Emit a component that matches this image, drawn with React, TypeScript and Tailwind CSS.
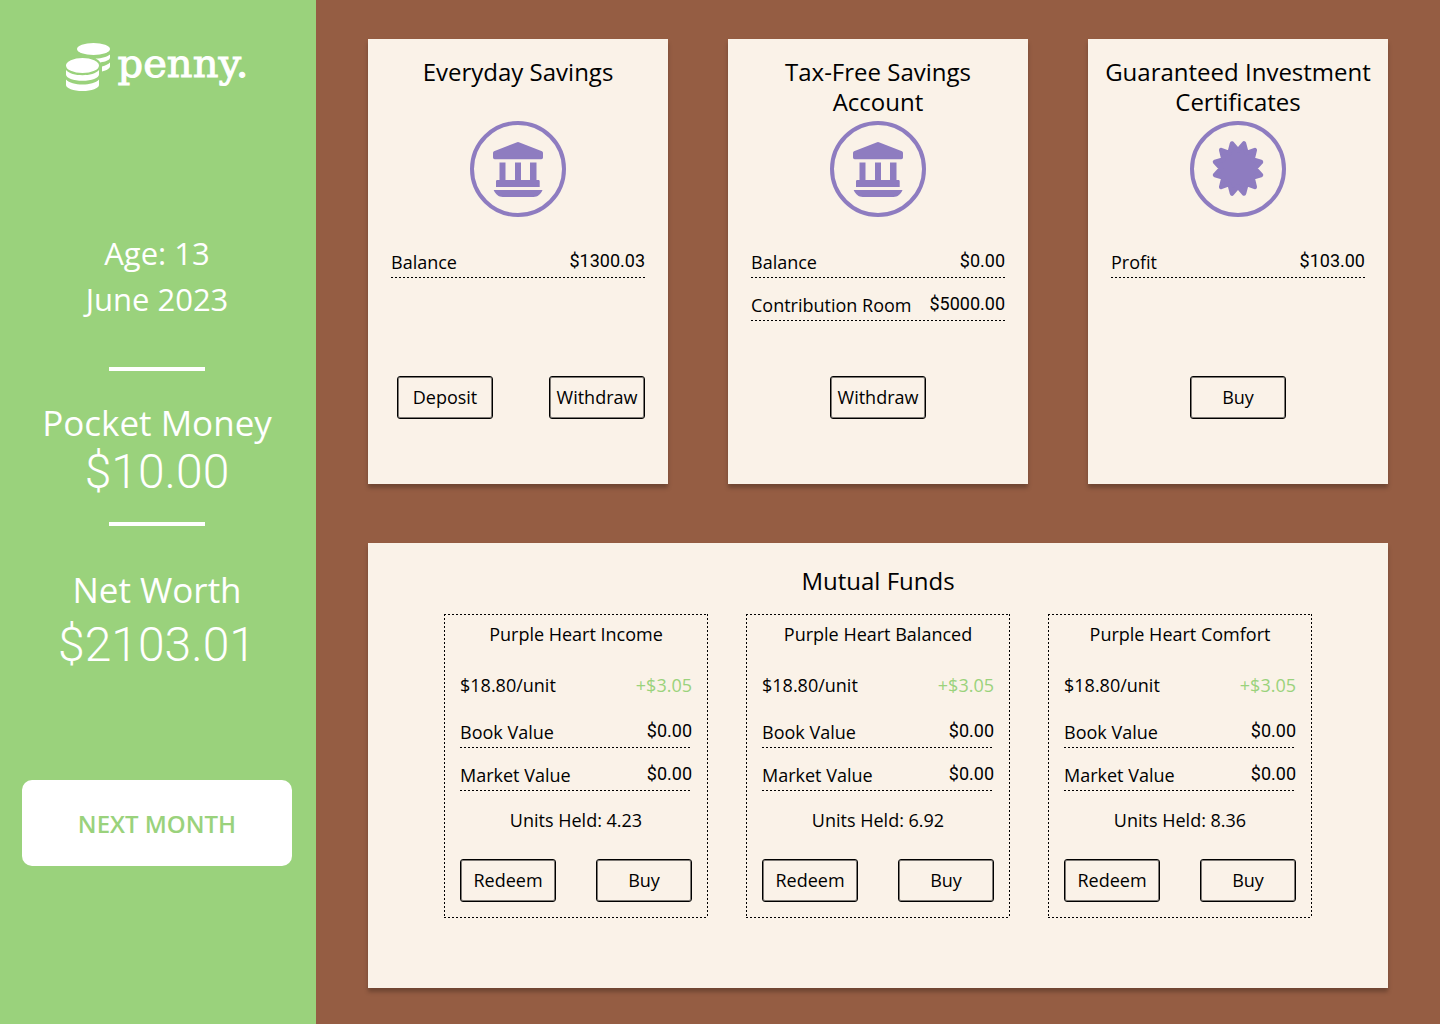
import React from 'react';

type Row = { label: string; value: string };

const ACCOUNTS: { title: string; icon: 'bank' | 'seal'; rows: Row[]; actions: string[] }[] = [
  {
    title: 'Everyday Savings',
    icon: 'bank',
    rows: [{ label: 'Balance', value: '$1300.03' }],
    actions: ['Deposit', 'Withdraw'],
  },
  {
    title: 'Tax-Free Savings Account',
    icon: 'bank',
    rows: [
      { label: 'Balance', value: '$0.00' },
      { label: 'Contribution Room', value: '$5000.00' },
    ],
    actions: ['Withdraw'],
  },
  {
    title: 'Guaranteed Investment Certificates',
    icon: 'seal',
    rows: [{ label: 'Profit', value: '$103.00' }],
    actions: ['Buy'],
  },
];

const FUNDS = [
  { name: 'Purple Heart Income', price: '$18.80/unit', change: '+$3.05', book: '$0.00', market: '$0.00', units: '4.23' },
  { name: 'Purple Heart Balanced', price: '$18.80/unit', change: '+$3.05', book: '$0.00', market: '$0.00', units: '6.92' },
  { name: 'Purple Heart Comfort', price: '$18.80/unit', change: '+$3.05', book: '$0.00', market: '$0.00', units: '8.36' },
];

const CoinsLogo = () => (
  <svg width="44" height="48" viewBox="0 0 44 48" fill="currentColor" aria-hidden="true">
    <ellipse cx="27.5" cy="6" rx="16.5" ry="6" />
    <path d="M44 11.5v3c0 2.4-4.2 4.3-9.8 4.9-1.2-1.7-2.9-2.9-4.7-3.8C36 15.300 41.500 13.900 44 11.500z" />
    <path d="M44 19.500v3.500c0 2.600-3.200 4.500-8 5.500v-5c3.500-.8 6.300-2.200 8-4z" />
    <ellipse cx="16.500" cy="22.500" rx="16.500" ry="7.500" />
    <path d="M0 27c3 3.500 9.500 5.200 16.500 5.200S30 30.500 33 27v4.500c0 3.500-7.400 6.300-16.500 6.300S0 35 0 31.500z" />
    <path d="M0 36.500c3 3.500 9.500 5 16.500 5s13.500-1.500 16.500-5V42c0 3.300-7.400 6-16.500 6S0 45.300 0 42z" />
  </svg>
);

const BankIcon = () => (
  <svg width="96" height="96" viewBox="0 0 96 96" aria-hidden="true">
    <circle cx="48" cy="48" r="46" fill="none" stroke="#8e7cc0" strokeWidth="4" />
    <g fill="#8e7cc0">
      <path d="M46.500 21.400a4 4 0 0 1 3 0L72 30.300q1 .5 1 1.700v4.500q0 1.700-1.700 1.700H24.700Q23 38.200 23 36.500V32q0-1.200 1-1.700z" />
      <path d="M29.500 41.500h6V59H45V41.500h6V59h9V41.500h6.500V59h2q1.200 0 1.200 1.200V66H26v-5.800Q26 59 27.200 59h2.300z" />
      <path d="M23.700 69h48.800c-1.600 4.200-5 7-9 7H32.700c-4 0-7.400-2.800-9-7z" />
    </g>
  </svg>
);

const SealIcon = () => (
  <svg width="96" height="96" viewBox="0 0 96 96" aria-hidden="true">
    <circle cx="48" cy="48" r="46" fill="none" stroke="#8e7cc0" strokeWidth="4" />
    <path
      d="M48 29.5L54 22.500L56.500 32L64.800 29L62.500 38.500L71 41L65 47.500L71 54L62.500 56.500L64.800 66L56.500 63L54 72.500L48 65.500L42 72.500L39.500 63L31.200 66L33.500 56.500L25 54L31 47.500L25 41L33.500 38.500L31.200 29L39.500 32L42 22.500Z"
      fill="#8e7cc0"
      stroke="#8e7cc0"
      strokeWidth="4.500"
      strokeLinejoin="round"
    />
  </svg>
);

const ValueRow: React.FC<Row> = ({ label, value }) => (
  <div>
    <div className="flex h-[42px] items-end justify-between pb-[3px] leading-6">
      <dt>{label}</dt>
      <dd className="pb-px font-[Roboto,sans-serif]">{value}</dd>
    </div>
    <div className="h-px bg-[repeating-linear-gradient(90deg,black_0_2px,transparent_2px_4px)]" />
  </div>
);

const ActionButton: React.FC<{ children: React.ReactNode }> = ({ children }) => (
  <button type="button" className="h-[43px] w-24 rounded-[3px] border border-black pb-0.5 shadow-[inset_0_0_0_1px_rgba(0,0,0,0.5)]">
    {children}
  </button>
);

const Sidebar = () => (
  <aside className="flex w-[316px] shrink-0 flex-col items-center bg-[#9ad27c] pt-[42px] pr-0.5 text-white">
    <div className="flex h-[50px] items-center gap-2">
      <CoinsLogo />
      <span className="pb-2 font-['DejaVu_Serif',serif] text-[40px] leading-10 [-webkit-text-stroke:1px_white]">penny.</span>
    </div>

    <div className="mt-[138px] text-center text-[31px] leading-[46px]">
      <p>Age: 13</p>
      <p>June 2023</p>
    </div>

    <hr className="mt-[45px] w-24 border-t-4 border-white" />

    <h2 className="mt-7 text-[35px] leading-12">Pocket Money</h2>
    <p className="mt-px font-[Roboto,sans-serif] text-5xl leading-12 font-light">$10.00</p>

    <hr className="mt-[26px] w-24 border-t-4 border-white" />

    <h2 className="mt-10 text-[35px] leading-12">Net Worth</h2>
    <p className="mt-[7px] font-[Roboto,sans-serif] text-5xl leading-12 font-light">$2103.01</p>

    <button type="button" className="mt-[111px] h-[86px] w-[270px] rounded-[10px] bg-white pt-0.5 text-2xl font-semibold text-[#9ad27c]">
      NEXT MONTH
    </button>
  </aside>
);

export default function App() {
  return (
    <div className="flex min-h-screen bg-[#955d43] font-['Open_Sans',sans-serif] text-lg text-black">
      <Sidebar />

      <main className="grid flex-1 grid-rows-2 gap-[59px] px-[52px] pt-[39px] pb-9">
        <section className="grid grid-cols-3 gap-[60px]">
          {ACCOUNTS.map((account) => (
            <article key={account.title} className="flex flex-col bg-[#faf2e8] px-[23px] pt-[18px] pb-[65px] shadow-[0_4px_4px_rgba(0,0,0,0.25)]">
              <h2 className="-mx-2 min-h-[60px] text-center text-2xl leading-[30px]">{account.title}</h2>
              <div className="mt-1 flex justify-center">{account.icon === 'bank' ? <BankIcon /> : <SealIcon />}</div>
              <dl className="mt-[18px]">
                {account.rows.map((row) => (
                  <ValueRow key={row.label} {...row} />
                ))}
              </dl>
              <div className={account.actions.length > 1 ? 'mt-auto flex justify-between pl-1.5' : 'mt-auto flex justify-center'}>
                {account.actions.map((action) => (
                  <ActionButton key={action}>{action}</ActionButton>
                ))}
              </div>
            </article>
          ))}
        </section>

        <section className="bg-[#faf2e8] px-[76px] pt-[23px] shadow-[0_4px_4px_rgba(0,0,0,0.25)]">
          <h2 className="text-center text-2xl leading-[30px]">Mutual Funds</h2>
          <div className="mt-[18px] grid grid-cols-3 gap-[38px]">
            {FUNDS.map((fund) => (
              // 2px dashes along each edge, tighter than a native dashed border
              <article
                key={fund.name}
                className="bg-[repeating-linear-gradient(90deg,#000_0_2px,#0000_2px_4px),repeating-linear-gradient(90deg,#000_0_2px,#0000_2px_4px),repeating-linear-gradient(180deg,#000_0_2px,#0000_2px_4px),repeating-linear-gradient(180deg,#000_0_2px,#0000_2px_4px)] [background-position:top,bottom,left,right] [background-size:100%_1px,100%_1px,1px_100%,1px_100%] bg-no-repeat px-4 pt-2 pb-4"
              >
                <h3 className="text-center leading-6">{fund.name}</h3>
                <p className="mt-[27px] flex justify-between leading-6">
                  <span>{fund.price}</span>
                  <span className="text-[#9ad27c]">{fund.change}</span>
                </p>
                <dl className="mt-2">
                  <ValueRow label="Book Value" value={fund.book} />
                  <ValueRow label="Market Value" value={fund.market} />
                </dl>
                <p className="mt-[17px] text-center leading-6">Units Held: {fund.units}</p>
                <div className="mt-[27px] flex justify-between">
                  <ActionButton>Redeem</ActionButton>
                  <ActionButton>Buy</ActionButton>
                </div>
              </article>
            ))}
          </div>
        </section>
      </main>
    </div>
  );
}
